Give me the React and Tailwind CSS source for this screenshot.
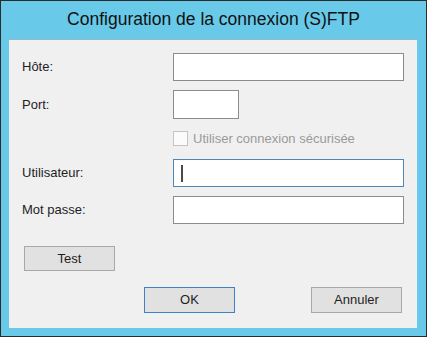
export default function App() {
  const font = { fontFamily: '"Liberation Sans", Arial, sans-serif' };

  return (
    <div className="w-[427px] h-[341px] bg-white" style={font}>
      <div className="w-[427px] h-[337px] bg-[#68c9e9] border border-[#2b2b2b] flex flex-col">
        {/* title bar */}
        <div className="h-[38px] flex items-center justify-center text-[17.5px] text-[#111] pb-[1px]">
          Configuration de la connexion (S)FTP
        </div>

        {/* client area */}
        <div className="ml-[8px] w-[408px] h-[289px] bg-[#f0f0f0] border-t border-[#9bb6c7] text-[13px] text-[#1e1e1e]">
          <div className="flex flex-col pl-[13px] pt-[13px]">
            <div className="flex items-center h-[28px]">
              <span className="w-[151px]">Hôte:</span>
              <div className="w-[231px] h-[28px] bg-white border border-[#8c8c8c]" />
            </div>

            <div className="flex items-center h-[29px] mt-[9px]">
              <span className="w-[151px]">Port:</span>
              <div className="w-[66px] h-[29px] bg-white border border-[#8c8c8c]" />
            </div>

            <div className="flex items-center h-[15px] mt-[12px] pl-[151px]">
              <div className="w-[15px] h-[15px] bg-[#fbfbfb] border border-[#c4c4c4]" />
              <span className="ml-[5px] text-[#9a9a9a]">Utiliser connexion sécurisée</span>
            </div>

            <div className="flex items-center h-[28px] mt-[13px]">
              <span className="w-[151px]">Utilisateur:</span>
              <div className="w-[231px] h-[28px] bg-white border border-[#4f86b8] flex items-center pl-[7px]">
                <div className="w-[2px] h-[17px] bg-[#4a4a4a]" />
              </div>
            </div>

            <div className="flex items-center h-[28px] mt-[9px]">
              <span className="w-[151px]">Mot passe:</span>
              <div className="w-[231px] h-[28px] bg-white border border-[#8c8c8c]" />
            </div>

            <button className="mt-[22px] ml-[2px] w-[91px] h-[25px] bg-[#e1e1e1] border border-[#a8a8a8] text-[13px] text-[#1e1e1e]">
              Test
            </button>

            <div className="flex mt-[16px] ml-[122px] gap-[76px]">
              <button className="w-[91px] h-[26px] bg-[#e1e1e1] border border-[#3f82c6] text-[13px] text-[#1e1e1e]">
                OK
              </button>
              <button className="w-[91px] h-[26px] bg-[#e1e1e1] border border-[#a8a8a8] text-[13px] text-[#1e1e1e]">
                Annuler
              </button>
            </div>
          </div>
        </div>
      </div>
    </div>
  );
}
